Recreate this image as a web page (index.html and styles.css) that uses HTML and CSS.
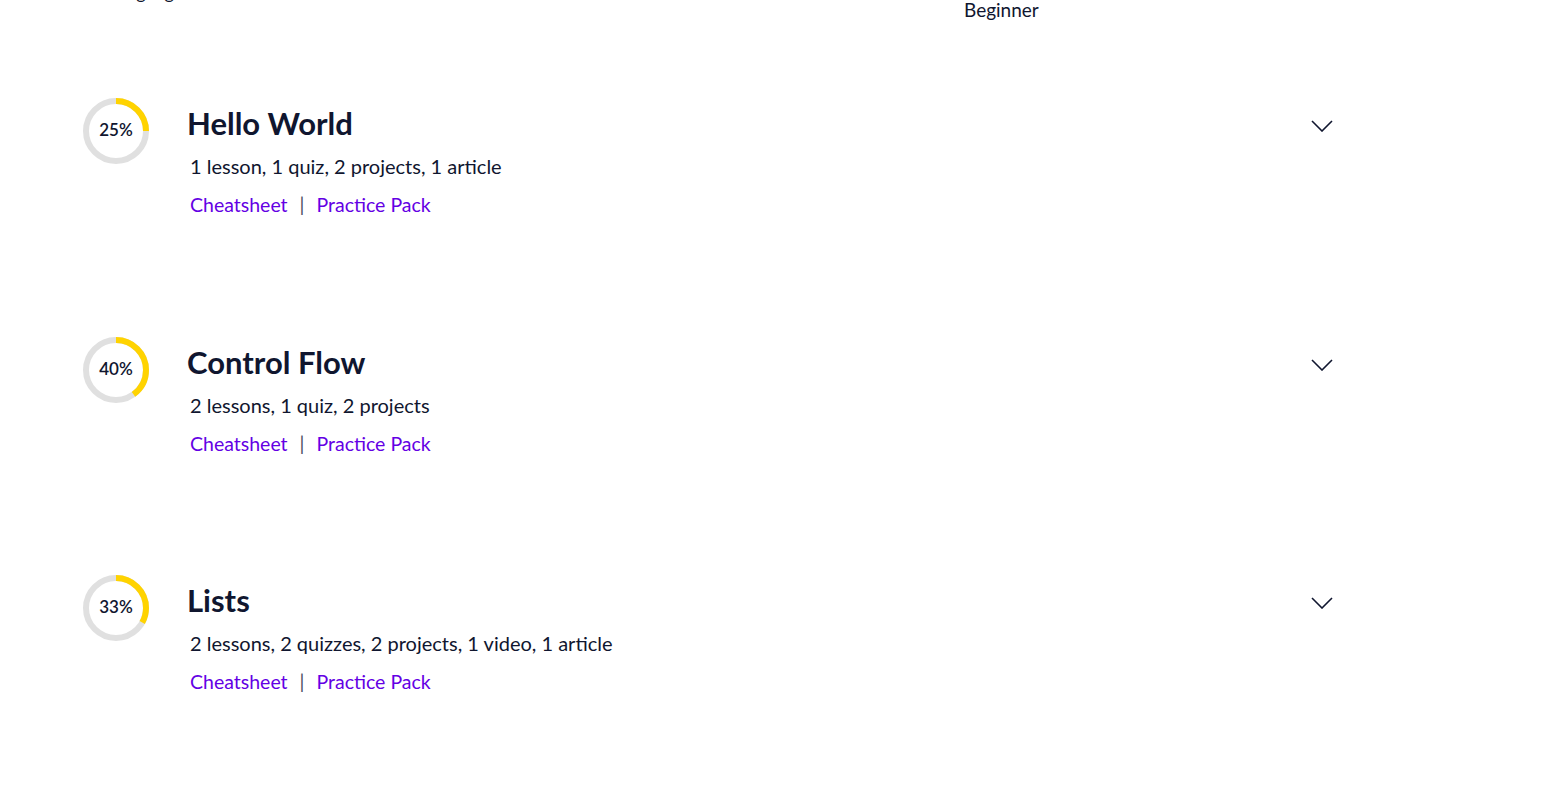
FILE: index.html
```html
<!DOCTYPE html>
<html lang="en">
<head>
<meta charset="utf-8">
<title>Syllabus</title>
<link rel="stylesheet" href="styles.css">
</head>
<body>
<div class="top">
  <div class="top-left">language</div>
  <div class="top-right">Beginner</div>
</div>
<main class="modules">
  <section class="module">
    <div class="ring">
      <svg width="68" height="68" viewBox="0 0 68 68">
        <circle cx="34" cy="34" r="30" fill="none" stroke="#e0e0e0" stroke-width="6"/>
        <circle cx="34" cy="34" r="30" fill="none" stroke="#ffd300" stroke-width="6" stroke-dasharray="47.12 188.5" transform="rotate(-90 34 34)"/>
      </svg>
      <span class="pct">25%</span>
    </div>
    <div class="info">
      <h2 class="title">Hello World</h2>
      <p class="desc">1 lesson, 1 quiz, 2 projects, 1 article</p>
      <div class="links"><a href="#">Cheatsheet</a><span class="sep">|</span><a href="#">Practice Pack</a></div>
    </div>
    <svg class="chev" width="22" height="12" viewBox="0 0 22 12"><path d="M1 1 L11 11 L21 1" fill="none" stroke="#10162f" stroke-width="1.6"/></svg>
  </section>
  <section class="module">
    <div class="ring">
      <svg width="68" height="68" viewBox="0 0 68 68">
        <circle cx="34" cy="34" r="30" fill="none" stroke="#e0e0e0" stroke-width="6"/>
        <circle cx="34" cy="34" r="30" fill="none" stroke="#ffd300" stroke-width="6" stroke-dasharray="75.4 188.5" transform="rotate(-90 34 34)"/>
      </svg>
      <span class="pct">40%</span>
    </div>
    <div class="info">
      <h2 class="title">Control Flow</h2>
      <p class="desc">2 lessons, 1 quiz, 2 projects</p>
      <div class="links"><a href="#">Cheatsheet</a><span class="sep">|</span><a href="#">Practice Pack</a></div>
    </div>
    <svg class="chev" width="22" height="12" viewBox="0 0 22 12"><path d="M1 1 L11 11 L21 1" fill="none" stroke="#10162f" stroke-width="1.6"/></svg>
  </section>
  <section class="module">
    <div class="ring">
      <svg width="68" height="68" viewBox="0 0 68 68">
        <circle cx="34" cy="34" r="30" fill="none" stroke="#e0e0e0" stroke-width="6"/>
        <circle cx="34" cy="34" r="30" fill="none" stroke="#ffd300" stroke-width="6" stroke-dasharray="62.2 188.5" transform="rotate(-90 34 34)"/>
      </svg>
      <span class="pct">33%</span>
    </div>
    <div class="info">
      <h2 class="title">Lists</h2>
      <p class="desc">2 lessons, 2 quizzes, 2 projects, 1 video, 1 article</p>
      <div class="links"><a href="#">Cheatsheet</a><span class="sep">|</span><a href="#">Practice Pack</a></div>
    </div>
    <svg class="chev" width="22" height="12" viewBox="0 0 22 12"><path d="M1 1 L11 11 L21 1" fill="none" stroke="#10162f" stroke-width="1.6"/></svg>
  </section>
</main>
</body>
</html>
```
FILE: styles.css
```css
html, body {
  margin: 0;
  padding: 0;
  background: #fff;
  color: #10162f;
  font-family: "Lato", "Noto Sans", sans-serif;
}
.top {
  display: flex;
  align-items: flex-start;
  height: 22px;
}
.top-left {
  width: 964px;
  padding-left: 113px;
  box-sizing: border-box;
  font-size: 18px;
  line-height: 22px;
  margin-top: -19px;
}
.top-right {
  font-size: 19px;
  line-height: 20px;
}
.modules {
  padding-left: 82px;
  padding-top: 75px;
}
.module {
  display: flex;
  align-items: flex-start;
  height: 238.5px;
}
.ring {
  position: relative;
  width: 68px;
  height: 68px;
  flex: none;
}
.ring svg { display: block; }
.pct {
  position: absolute;
  inset: 0;
  display: flex;
  align-items: center;
  justify-content: center;
  font-size: 17px;
  font-weight: 600;
  padding-bottom: 3px;
}
.info {
  margin-left: 37px;
  width: 1100px;
}
.title {
  margin: 7px 0 0;
  font-size: 31px;
  line-height: 38px;
  font-weight: 700;
}
.desc {
  margin: 11px 0 0 3px;
  font-size: 20px;
  line-height: 26px;
}
.links {
  margin: 14px 0 0 3px;
  font-size: 19.5px;
  line-height: 24px;
  display: flex;
  align-items: center;
}
.links a {
  color: #6400e4;
  text-decoration: none;
}
.sep {
  margin: 0 12px;
  color: #4b4f60;
}
.chev {
  margin-top: 23px;
  margin-left: 24px;
}
```
